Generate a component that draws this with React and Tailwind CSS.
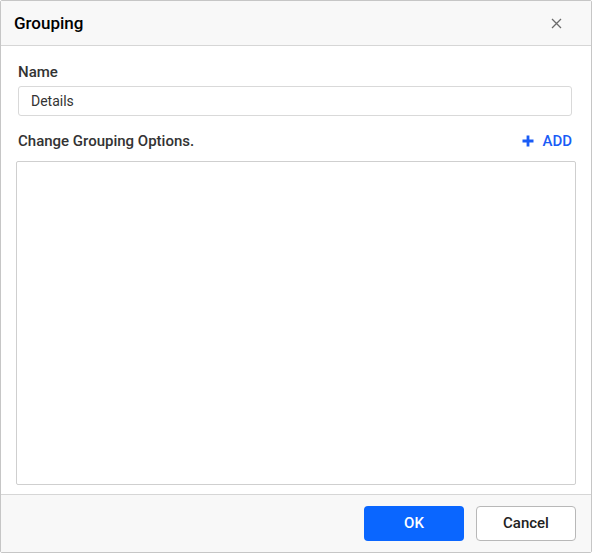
import React from "react";

const App = () => {
  return (
    <div className="w-[592px] h-[553px] bg-white" style={{ fontFamily: "Roboto, 'Liberation Sans', sans-serif" }}>
      <div className="flex flex-col w-full h-full border border-[#c6c6c6] rounded-[2px]">
        <div className="flex items-center justify-between h-[45px] px-[13px] bg-[#f8f8f8] border-b border-[#d6d6d6]">
          <h2 className="text-[17px] font-medium text-black leading-none">Grouping</h2>
          <button className="w-[20px] h-[20px] flex items-center justify-center mr-[12px] text-[#6b6b6b]">
            <svg width="11" height="11" viewBox="0 0 11 11">
              <path d="M1 1L10 10M10 1L1 10" stroke="currentColor" strokeWidth="1.3" />
            </svg>
          </button>
        </div>

        <div className="flex flex-col flex-1 px-[17px] pt-[16px] pb-[9px]">
          <label className="text-[15px] font-medium text-[#333] leading-[20px]">Name</label>
          <input
            className="mt-[4px] h-[30px] w-[554px] px-[12px] border border-[#d9d9d9] rounded-[3px] text-[14px] text-[#333] focus:outline-none"
            defaultValue="Details"
          />
          <div className="flex items-center justify-between mt-[14px] h-[22px]">
            <span className="text-[15px] font-medium text-[#333]">Change Grouping Options.</span>
            <button className="flex items-center gap-[8px] text-[#1a5cf6] text-[15px] font-medium mr-[2px]">
              <svg width="12" height="12" viewBox="0 0 12 12">
                <path d="M6 0.5V11.5M0.5 6H11.5" stroke="currentColor" strokeWidth="2.8" />
              </svg>
              ADD
            </button>
          </div>
          <div className="flex-1 mt-[9px] -ml-[2px] w-[560px] border border-[#cfcfcf] rounded-[2px]"></div>
        </div>

        <div className="flex items-center justify-end gap-[12px] h-[58px] pr-[15px] bg-[#f8f8f8] border-t border-[#d6d6d6]">
          <button className="w-[100px] h-[35px] rounded-[4px] bg-[#0a66ff] text-white text-[15px] font-medium">OK</button>
          <button className="w-[100px] h-[35px] rounded-[4px] bg-white border border-[#b8b8b8] text-[#222] text-[15px] font-medium">Cancel</button>
        </div>
      </div>
    </div>
  );
};

export default App;
